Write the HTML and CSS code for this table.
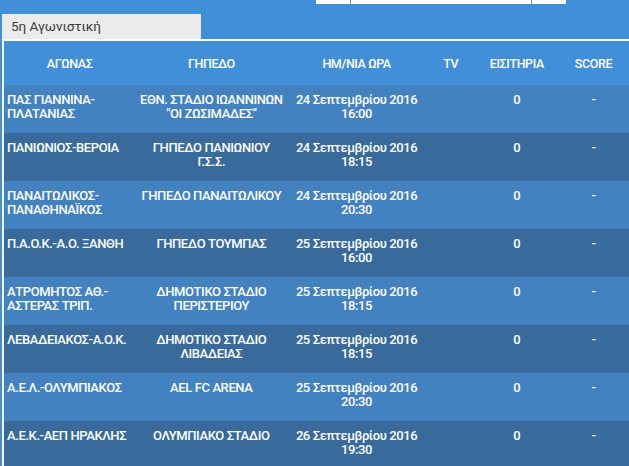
FILE: index.html
```html
<!DOCTYPE html>
<html lang="el">
<head>
<meta charset="utf-8">
<title>5η Αγωνιστική</title>
<link rel="stylesheet" href="styles.css">
</head>
<body>
<div class="topbar">
  <div class="seg seg-a"></div>
  <div class="seg seg-b"></div>
  <div class="seg seg-c"></div>
</div>
<div class="tabs">
  <div class="tab">5η Αγωνιστική</div>
</div>
<table class="fixtures">
  <colgroup>
    <col class="c1"><col class="c2"><col class="c3"><col class="c4"><col class="c5"><col class="c6">
  </colgroup>
  <thead>
    <tr>
      <th>ΑΓΩΝΑΣ</th><th>ΓΗΠΕΔΟ</th><th>ΗΜ/ΝΙΑ ΩΡΑ</th><th>TV</th><th>ΕΙΣΙΤΗΡΙΑ</th><th>SCORE</th>
    </tr>
  </thead>
  <tbody>
    <tr class="odd">
      <td class="match">ΠΑΣ ΓΙΑΝΝΙΝΑ-<br>ΠΛΑΤΑΝΙΑΣ</td>
      <td>ΕΘΝ. ΣΤΑΔΙΟ ΙΩΑΝΝΙΝΩΝ "ΟΙ ΖΩΣΙΜΑΔΕΣ"</td>
      <td>24 Σεπτεμβρίου 2016<br>16:00</td><td></td><td>0</td><td>-</td>
    </tr>
    <tr class="even">
      <td class="match">ΠΑΝΙΩΝΙΟΣ-ΒΕΡΟΙΑ</td>
      <td>ΓΗΠΕΔΟ ΠΑΝΙΩΝΙΟΥ<br>Γ.Σ.Σ.</td>
      <td>24 Σεπτεμβρίου 2016<br>18:15</td><td></td><td>0</td><td>-</td>
    </tr>
    <tr class="odd">
      <td class="match">ΠΑΝΑΙΤΩΛΙΚΟΣ-<br>ΠΑΝΑΘΗΝΑΪΚΟΣ</td>
      <td>ΓΗΠΕΔΟ ΠΑΝΑΙΤΩΛΙΚΟΥ</td>
      <td>24 Σεπτεμβρίου 2016<br>20:30</td><td></td><td>0</td><td>-</td>
    </tr>
    <tr class="even">
      <td class="match">Π.Α.Ο.Κ.-Α.Ο. ΞΑΝΘΗ</td>
      <td>ΓΗΠΕΔΟ ΤΟΥΜΠΑΣ</td>
      <td>25 Σεπτεμβρίου 2016<br>16:00</td><td></td><td>0</td><td>-</td>
    </tr>
    <tr class="odd">
      <td class="match">ΑΤΡΟΜΗΤΟΣ ΑΘ.-<br>ΑΣΤΕΡΑΣ ΤΡΙΠ.</td>
      <td>ΔΗΜΟΤΙΚΟ ΣΤΑΔΙΟ<br>ΠΕΡΙΣΤΕΡΙΟΥ</td>
      <td>25 Σεπτεμβρίου 2016<br>18:15</td><td></td><td>0</td><td>-</td>
    </tr>
    <tr class="even">
      <td class="match">ΛΕΒΑΔΕΙΑΚΟΣ-Α.Ο.Κ.</td>
      <td>ΔΗΜΟΤΙΚΟ ΣΤΑΔΙΟ<br>ΛΙΒΑΔΕΙΑΣ</td>
      <td>25 Σεπτεμβρίου 2016<br>18:15</td><td></td><td>0</td><td>-</td>
    </tr>
    <tr class="odd">
      <td class="match">Α.Ε.Λ.-ΟΛΥΜΠΙΑΚΟΣ</td>
      <td>AEL FC ARENA</td>
      <td>25 Σεπτεμβρίου 2016<br>20:30</td><td></td><td>0</td><td>-</td>
    </tr>
    <tr class="even">
      <td class="match">Α.Ε.Κ.-ΑΕΠ ΗΡΑΚΛΗΣ</td>
      <td>ΟΛΥΜΠΙΑΚΟ ΣΤΑΔΙΟ</td>
      <td>26 Σεπτεμβρίου 2016<br>19:30</td><td></td><td>0</td><td>-</td>
    </tr>
  </tbody>
</table>
</body>
</html>
```

FILE: styles.css
```css
html, body {
  margin: 0;
  padding: 0;
}
body {
  background: #428fd9;
  font-family: Roboto, "Noto Sans", sans-serif;
  color: #fff;
  overflow: hidden;
}
.topbar {
  display: flex;
  margin-left: 316px;
  width: 250px;
  height: 4px;
}
.seg {
  background: #fff;
  height: 4px;
}
.seg-a { width: 34px; border-right: 1px solid #8a8a8a; }
.seg-b { width: 180px; border-right: 1px solid #8a8a8a; }
.seg-c { width: 34px; }
.tabs {
  display: flex;
  padding: 10px 0 0 2px;
}
.tab {
  width: 190px;
  height: 25px;
  padding-left: 9px;
  background: #ebebeb;
  color: #3a3a3a;
  font-size: 13.5px;
  line-height: 25px;
}
.fixtures {
  margin-left: 2px;
  width: 627px;
  table-layout: fixed;
  border-collapse: collapse;
  border-top: 2px solid #fff;
  border-left: 2px solid #fff;
  font-size: 13px;
  letter-spacing: -0.4px;
}
.c1 { width: 132px; }
.c2 { width: 152px; }
.c3 { width: 138px; }
.c4 { width: 50px; }
.c5 { width: 82px; }
.c6 { width: 71px; }
.fixtures th {
  height: 44px;
  padding: 0;
  font-weight: 500;
  font-size: 12.5px;
  text-align: center;
  vertical-align: middle;
  background: #428fd9;
}
.fixtures td {
  height: 48px;
  padding: 8px 0 0;
  box-sizing: border-box;
  text-align: center;
  vertical-align: top;
  line-height: 14px;
  font-weight: 500;
}
.fixtures td.match {
  text-align: left;
  padding-left: 3px;
}
.odd td { background: #4382c0; }
.even td { background: #386b9c; }
```
